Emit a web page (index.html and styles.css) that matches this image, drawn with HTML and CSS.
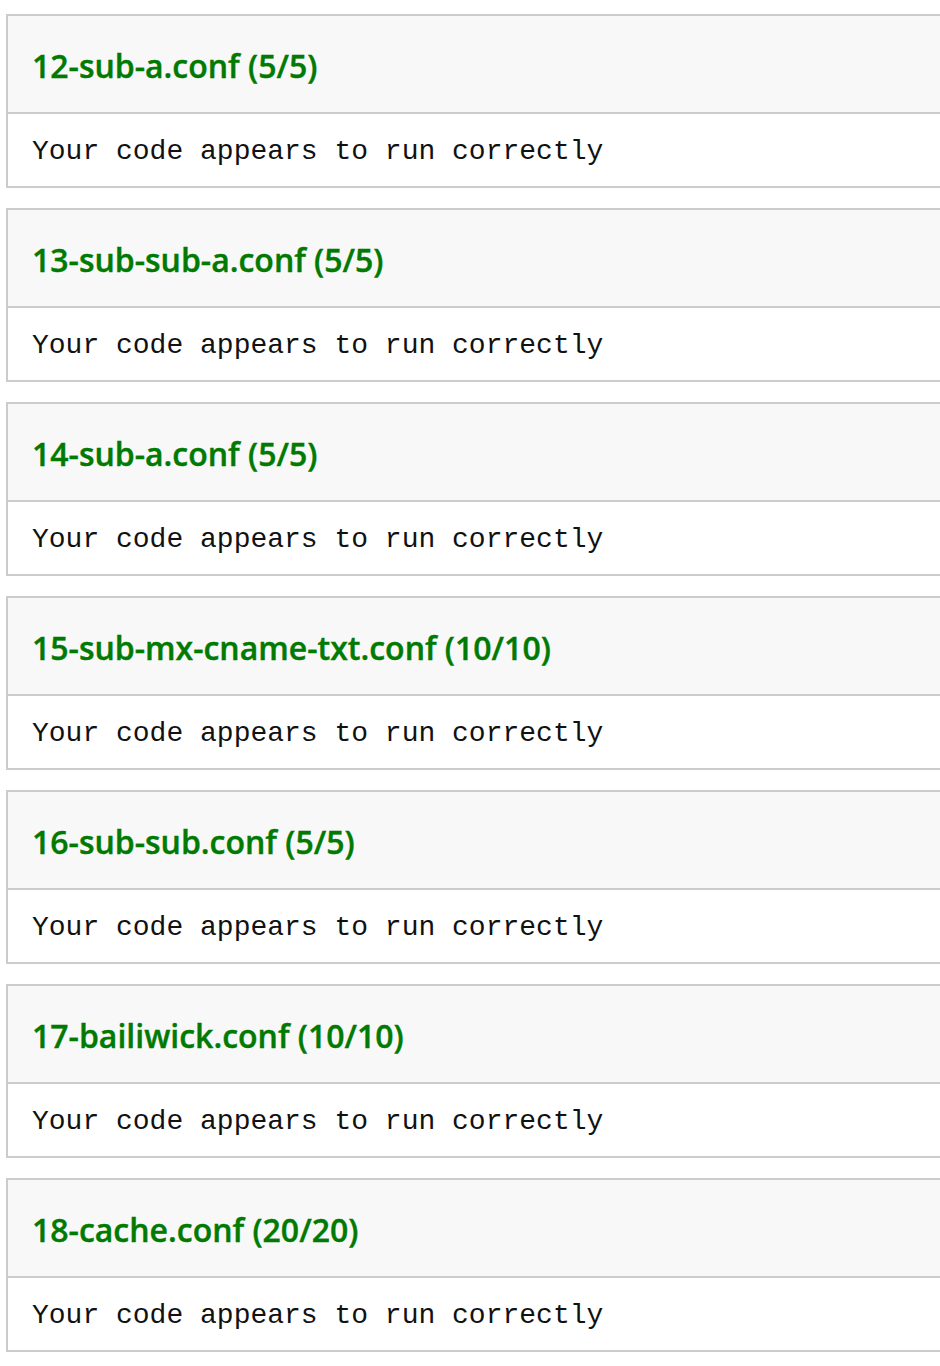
FILE: index.html
```html
<!DOCTYPE html>
<html lang="en">
<head>
<meta charset="utf-8">
<title>Results</title>
<link rel="stylesheet" href="styles.css">
</head>
<body>
<main class="results">
  <section class="card">
    <h2 class="card-title">12-sub-a.conf (5/5)</h2>
    <div class="card-body">Your code appears to run correctly</div>
  </section>
  <section class="card">
    <h2 class="card-title">13-sub-sub-a.conf (5/5)</h2>
    <div class="card-body">Your code appears to run correctly</div>
  </section>
  <section class="card">
    <h2 class="card-title">14-sub-a.conf (5/5)</h2>
    <div class="card-body">Your code appears to run correctly</div>
  </section>
  <section class="card">
    <h2 class="card-title">15-sub-mx-cname-txt.conf (10/10)</h2>
    <div class="card-body">Your code appears to run correctly</div>
  </section>
  <section class="card">
    <h2 class="card-title">16-sub-sub.conf (5/5)</h2>
    <div class="card-body">Your code appears to run correctly</div>
  </section>
  <section class="card">
    <h2 class="card-title">17-bailiwick.conf (10/10)</h2>
    <div class="card-body">Your code appears to run correctly</div>
  </section>
  <section class="card">
    <h2 class="card-title">18-cache.conf (20/20)</h2>
    <div class="card-body">Your code appears to run correctly</div>
  </section>
</main>
</body>
</html>
```

FILE: styles.css
```css
html, body {
  margin: 0;
  padding: 0;
  background: #fff;
  overflow: hidden;
}

.results {
  display: flex;
  flex-direction: column;
  gap: 20px;
  padding: 14px 0 0 6px;
  width: 980px;
}

.card {
  border: 2px solid #cccccc;
  background: #fff;
}

.card-title {
  margin: 0;
  padding: 26px 24px 22px;
  background: #f8f8f8;
  border-bottom: 2px solid #cccccc;
  font-family: "Open Sans", "Noto Sans", sans-serif;
  font-weight: 600;
  font-size: 32px;
  line-height: 48px;
  color: #007a00;
  -webkit-text-stroke: 0.4px #007a00;
}

.card-body {
  padding: 20px 24px 16px;
  font-family: "Liberation Mono", "Courier New", monospace;
  font-size: 28px;
  line-height: 36px;
  color: #111;
}
```
